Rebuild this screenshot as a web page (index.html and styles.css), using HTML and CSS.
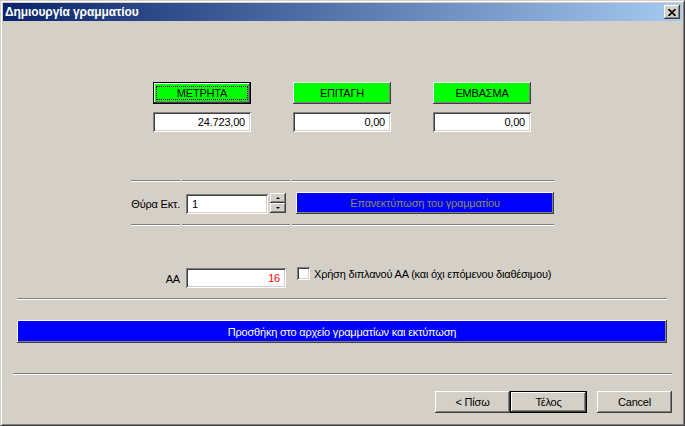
FILE: index.html
```html
<!DOCTYPE html>
<html lang="el">
<head>
  <meta charset="UTF-8" />
  <title>Δημιουργία γραμματίου</title>
  <link rel="stylesheet" href="styles.css">
</head>
<body>
  <div class="window">
    <div class="titlebar">
      <span class="title">Δημιουργία γραμματίου</span>
      <button class="close-btn">
        <svg width="8" height="7" viewBox="0 0 8 7"><path d="M0.5 0 L7.5 7 M7.5 0 L0.5 7" stroke="#000" stroke-width="1.6"/></svg>
      </button>
    </div>

    <div class="content">
      <div class="pay-row">
        <button class="btn green default"><span class="focus">ΜΕΤΡΗΤΑ</span></button>
        <button class="btn green">ΕΠΙΤΑΓΗ</button>
        <button class="btn green">ΕΜΒΑΣΜΑ</button>
      </div>
      <div class="pay-row amounts">
        <input class="field num" value="24.723,00">
        <input class="field num" value="0,00">
        <input class="field num" value="0,00">
      </div>

      <div class="port-table">
        <div class="cell label-cell">Θύρα Εκτ.</div>
        <div class="cell">
          <input class="field port" value="1">
          <div class="spinner">
            <button class="spin"><span class="arrow up"></span></button>
            <button class="spin"><span class="arrow down"></span></button>
          </div>
        </div>
        <div class="cell">
          <button class="btn blue reprint">Επανεκτύπωση του γραμματίου</button>
        </div>
      </div>

      <div class="aa-row">
        <div class="aa-label">ΑΑ</div>
        <input class="field num aa" value="16">
        <label class="check">
          <span class="box"></span>
          Χρήση διπλανού ΑΑ (και όχι επόμενου διαθέσιμου)
        </label>
      </div>

      <div class="sep sep-mid"></div>
      <button class="btn blue add">Προσθήκη στο αρχείο γραμματίων και εκτύπωση</button>
      <div class="sep sep-bottom"></div>

      <div class="nav-row">
        <button class="btn nav">&lt; Πίσω</button>
        <button class="btn nav default">Τέλος</button>
        <button class="btn nav cancel">Cancel</button>
      </div>
    </div>
  </div>
</body>
</html>
```

FILE: styles.css
```css
:root {
  --face: #d4d0c8;
  --shadow: #808080;
  --dark: #404040;
  --light: #ffffff;
}

* {
  box-sizing: border-box;
}

body {
  margin: 0;
  font-family: 'Liberation Sans', Arial, sans-serif;
  font-size: 11px;
  letter-spacing: -0.2px;
  color: #000;
  background: var(--face);
}

.window {
  width: 685px;
  height: 426px;
  background: var(--face);
  border: 1px solid;
  border-color: var(--face) var(--dark) var(--dark) var(--face);
  box-shadow: inset 1px 1px var(--light), inset -1px -1px var(--shadow);
  padding: 2px;
  display: flex;
  flex-direction: column;
}

.titlebar {
  height: 18px;
  background: linear-gradient(to right, #0a246a, #a6caf0);
  display: flex;
  align-items: center;
  justify-content: space-between;
  padding: 0 2px;
}

.title {
  color: #fff;
  font-weight: bold;
  font-size: 12px;
  letter-spacing: -0.1px;
}

.close-btn {
  width: 16px;
  height: 14px;
  padding: 0;
  border: none;
  background: var(--face);
  box-shadow: inset -1px -1px var(--dark), inset 1px 1px var(--light), inset -2px -2px var(--shadow);
  display: flex;
  align-items: center;
  justify-content: center;
}

.content {
  flex: 1;
  display: flex;
  flex-direction: column;
}

button {
  font-family: inherit;
  font-size: 11px;
  letter-spacing: inherit;
}

.btn {
  border: none;
  padding: 0;
  background: var(--face);
  color: #000;
  box-shadow: inset -1px -1px var(--dark), inset 1px 1px var(--light), inset -2px -2px var(--shadow);
}

.btn.default {
  border: 1px solid #000;
}

.green {
  background: #00ff00;
}

.blue {
  background: #0000ff;
  color: #fff;
}

.pay-row {
  display: flex;
  gap: 42px;
  margin: 61px 0 0 150px;
}

.pay-row .btn {
  width: 98px;
  height: 22px;
}

.focus {
  display: block;
  margin: 3px;
  line-height: 12px;
  outline: 1px dotted #000;
}

.amounts {
  margin-top: 8px;
}

.field {
  border: none;
  outline: none;
  background: #fff;
  font-family: inherit;
  font-size: 11px;
  letter-spacing: inherit;
  color: #000;
  height: 20px;
  padding: 0 6px;
  box-shadow: inset 1px 1px var(--shadow), inset -1px -1px var(--light), inset 2px 2px var(--dark), inset -2px -2px var(--face);
}

.num {
  text-align: right;
  width: 98px;
}

.port-table {
  display: grid;
  grid-template-columns: 49px 108px 262px;
  column-gap: 2px;
  margin: 48px 0 0 128px;
  width: 423px;
}

.cell {
  height: 46px;
  border-top: 1px solid var(--shadow);
  border-bottom: 1px solid var(--light);
  box-shadow: inset 0 1px var(--light), inset 0 -1px var(--shadow);
  display: flex;
  align-items: center;
  padding-left: 4px;
}

.label-cell {
  justify-content: flex-end;
  white-space: nowrap;
  padding: 1px 0 0 0;
}

.port {
  width: 82px;
  margin-top: 1px;
}

.spinner {
  display: flex;
  flex-direction: column;
  margin-left: 2px;
}

.spin {
  width: 16px;
  height: 10px;
  padding: 0;
  border: none;
  background: var(--face);
  box-shadow: inset -1px -1px var(--dark), inset 1px 1px var(--light), inset -2px -2px var(--shadow);
  display: flex;
  align-items: center;
  justify-content: center;
}

.arrow {
  width: 0;
  height: 0;
  border-left: 2px solid transparent;
  border-right: 2px solid transparent;
}

.arrow.up {
  border-bottom: 2px solid #000;
}

.arrow.down {
  border-top: 2px solid #000;
}

.reprint {
  width: 258px;
  height: 22px;
  color: #8c8c50;
}

.aa-row {
  display: flex;
  align-items: flex-start;
  margin-top: 42px;
  height: 20px;
}

.aa-label {
  width: 177px;
  text-align: right;
  line-height: 22px;
}

.aa {
  width: 100px;
  margin-left: 6px;
  color: #ff0000;
}

.check {
  display: flex;
  align-items: center;
  margin: -1px 0 0 11px;
  gap: 4px;
}

.box {
  width: 13px;
  height: 13px;
  background: #fff;
  box-shadow: inset 1px 1px var(--shadow), inset -1px -1px var(--light), inset 2px 2px var(--dark), inset -2px -2px var(--face);
}

.sep {
  height: 2px;
  border-top: 1px solid var(--shadow);
  border-bottom: 1px solid var(--light);
}

.sep-mid {
  margin: 10px 0 0 14px;
  width: 650px;
}

.add {
  margin: 20px 0 0 14px;
  width: 650px;
  height: 23px;
}

.sep-bottom {
  margin: 30px 0 0 10px;
  width: 659px;
}

.nav-row {
  display: flex;
  margin: 16px 0 0 432px;
}

.nav {
  width: 75px;
  height: 22px;
}

.nav.default {
  width: 77px;
}

.cancel {
  margin-left: 10px;
}
```
